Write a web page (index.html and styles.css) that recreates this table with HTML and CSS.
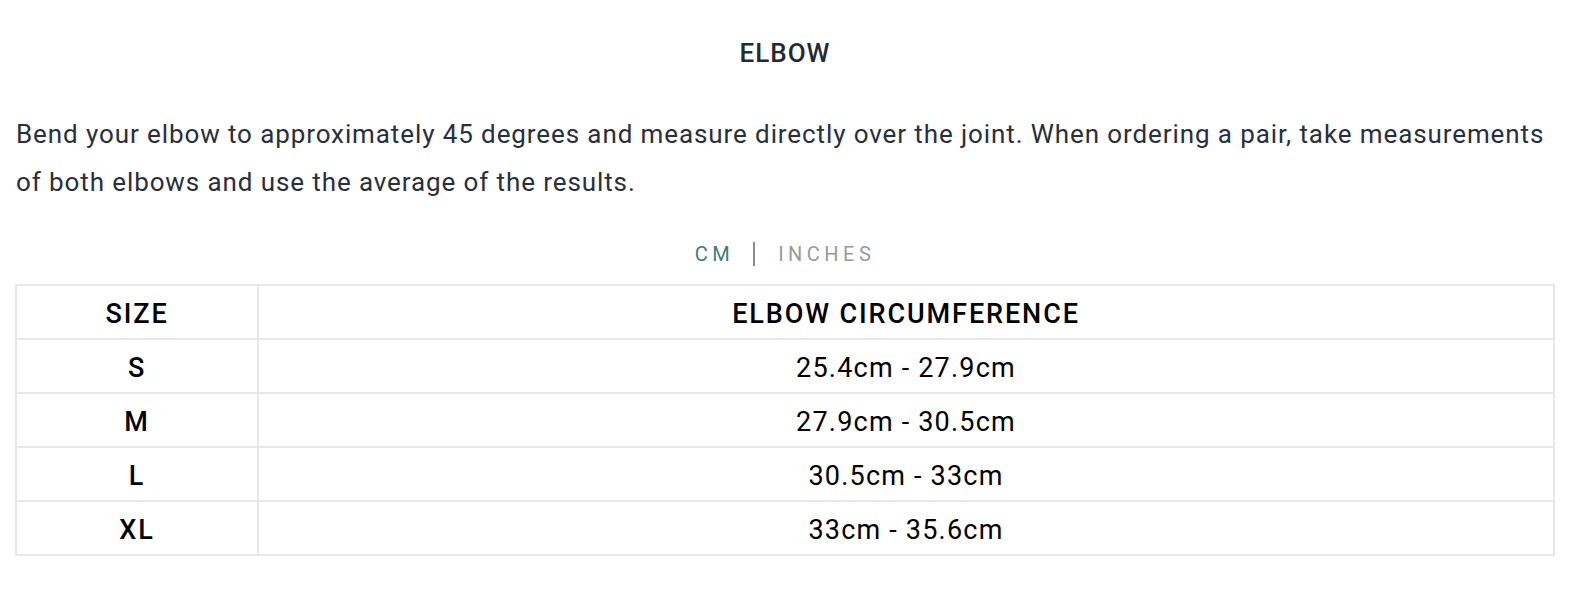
FILE: index.html
```html
<!DOCTYPE html>
<html>
<head>
<meta charset="utf-8">
<link rel="stylesheet" href="styles.css">
</head>
<body>
<div class="guide">
  <h2 class="title">ELBOW</h2>
  <p class="desc">Bend your elbow to approximately 45 degrees and measure directly over the joint. When ordering a pair, take measurements of both elbows and use the average of the results.</p>
  <div class="units">
    <span class="unit active">CM</span>
    <span class="sep"></span>
    <span class="unit">INCHES</span>
  </div>
  <table class="chart">
    <thead>
      <tr><th class="c-size">SIZE</th><th>ELBOW CIRCUMFERENCE</th></tr>
    </thead>
    <tbody>
      <tr><td class="c-size">S</td><td>25.4cm - 27.9cm</td></tr>
      <tr><td class="c-size">M</td><td>27.9cm - 30.5cm</td></tr>
      <tr><td class="c-size">L</td><td>30.5cm - 33cm</td></tr>
      <tr><td class="c-size">XL</td><td>33cm - 35.6cm</td></tr>
    </tbody>
  </table>
</div>
</body>
</html>
```
FILE: styles.css
```css
html, body {
  margin: 0;
  padding: 0;
  background: #fff;
}
body {
  font-family: Roboto, "Liberation Sans", sans-serif;
}
.guide {
  width: 1540px;
  margin-left: 15px;
  padding-top: 37px;
}
.title {
  margin: 0;
  font-size: 26px;
  line-height: 32px;
  font-weight: 500;
  text-align: center;
  color: #232a33;
  letter-spacing: 1px;
}
.desc {
  margin: 41px -20px 0 1px;
  font-size: 26px;
  line-height: 48px;
  font-weight: 400;
  color: #28303b;
  letter-spacing: 0.9px;
}
.units {
  margin-top: 36px;
  display: flex;
  justify-content: center;
  align-items: center;
  font-size: 20px;
  line-height: 24px;
  letter-spacing: 4.5px;
}
.unit { color: #9a9a9a; }
.unit.active { color: #3e7c79; }
.sep {
  width: 2px;
  height: 24px;
  background: #8c8c8c;
  margin: 0 23px 0 19px;
}
.chart {
  margin-top: 18px;
  width: 100%;
  border-collapse: collapse;
  font-size: 27px;
  line-height: 47px;
  color: #000;
}
.chart th, .chart td {
  border: 2px solid #e8e8e8;
  padding: 5px 0 0 0;
  text-align: center;
  vertical-align: top;
}
.chart th {
  font-weight: 500;
  letter-spacing: 1.9px;
}
.chart td {
  font-weight: 400;
  letter-spacing: 1.2px;
}
.chart td.c-size {
  font-weight: 500;
  letter-spacing: 1.9px;
}
.c-size { width: 240px; }
```
